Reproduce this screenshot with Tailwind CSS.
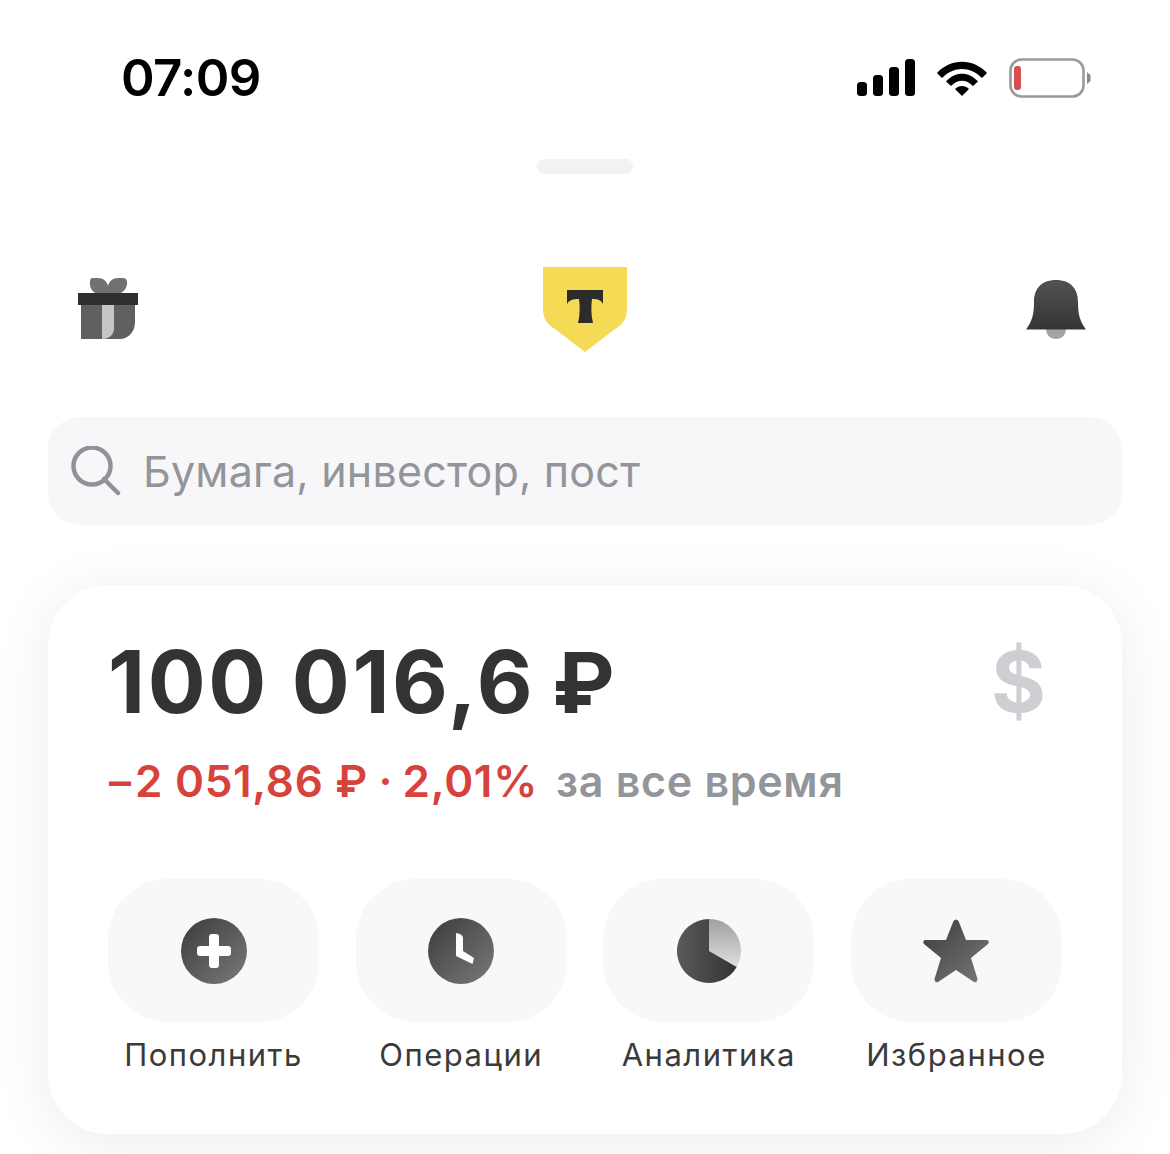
<!DOCTYPE html>
<html lang="ru">
<head>
<meta charset="utf-8">
<script src="https://cdn.jsdelivr.net/npm/@tailwindcss/browser@4"></script>
<title>Портфель</title>
</head>
<body class="bg-white">
<div class="w-[1170px] h-[1154px] overflow-hidden bg-white font-['Inter','Noto_Sans',sans-serif]">
  <!-- status bar -->
  <div class="flex items-center justify-between h-[60px] mt-[48px] pl-[121px] pr-[79px]">
    <span class="text-[51px] leading-[60px] font-semibold text-black tracking-[-0.6px]">07:09</span>
    <div class="flex items-center gap-[22px]">
      <svg class="w-[58px] h-[38px]" viewBox="0 0 58 38"><rect x="0" y="23" width="10" height="14" rx="3.5"/><rect x="16" y="16" width="10" height="21" rx="3.5"/><rect x="32" y="8" width="10" height="29" rx="3.5"/><rect x="48" y="0" width="10" height="37" rx="3.5"/></svg>
      <svg class="w-[50px] h-[38px]" viewBox="0 0 50 38"><path d="M0 14 C14 -1 36 -1 50 14 L45 19 C33 7 17 7 5 19Z"/><path d="M9 22.5 C18 12 32 12 41 22.5 L36 27 C29 20 21 20 14 27Z"/><path d="M18 30 C22 26 28 26 32 30 L25 37Z"/></svg>
      <svg class="w-[82px] h-[40px]" viewBox="0 0 82 40"><rect x="1.5" y="1.5" width="73" height="37" rx="11" fill="none" stroke="#9a9a9a" stroke-width="2.6"/><rect x="5" y="8" width="7" height="24" rx="3" fill="#d94f4f"/><path d="M78 14 L81.500 17 V23 L78 26Z" fill="#8a8a8a"/></svg>
    </div>
  </div>

  <!-- handle -->
  <div class="w-[96px] h-[15px] rounded-full bg-[#f1f2f4] mx-auto mt-[51px]"></div>

  <!-- header icons -->
  <div class="flex items-start h-[85px] mt-[93px] pl-[78px]">
    <svg class="w-[60px] h-[61px] mt-[11px]" viewBox="0 0 60 61">
      <path d="M12 3 Q12 0 15 0 H20 C25 0 29 3 30 8 C31 3 35 0 40 0 H45 Q48 0 49 3 C50 10 45 15 40 16 H20 C15 15 11 10 12 3Z" fill="#717171"/>
      <path d="M3 27 H57 V44 C57 54 50 61 42 61 H3Z" fill="#606060"/>
      <path d="M24 27 H36 V50 C36 57 31 61 24 61Z" fill="#c6c6c6"/>
      <rect x="0" y="15" width="60" height="12" fill="#2f2f2f"/>
    </svg>
    <svg class="w-[84px] h-[85px] ml-[405px]" viewBox="0 0 84 85">
      <path d="M0 0 H84 V42 C84 52 79 58 72 62 L42 85 L12 62 C5 58 0 52 0 42Z" fill="#f5da55"/>
      <path d="M24 23 H60 V37 C58 33 55 32 49 32 C48 40 48 48 50 56 H35 C37 48 37 40 36 32 C30 32 26 33 24 37Z" fill="#2e2c2a"/>
    </svg>
    <svg class="w-[60px] h-[60px] mt-[13px] ml-[399px]" viewBox="0 0 60 60">
      <defs><linearGradient id="bell" x1="0" y1="0" x2="0" y2="1"><stop offset="0" stop-color="#525252"/><stop offset="1" stop-color="#353535"/></linearGradient></defs>
      <path d="M20 48 H40 C40 55 36 59 30 59 C24 59 20 55 20 48Z" fill="#a3a3a3"/>
      <path d="M30 0 C45 0 52 9 52 22 C52 35 54 41 60 49.500 H0 C6 41 8 35 8 22 C8 9 15 0 30 0Z" fill="url(#bell)"/>
    </svg>
  </div>

  <!-- search -->
  <div class="flex items-center gap-[22px] h-[108px] mt-[65px] mx-[48px] pl-[23px] rounded-[32px] bg-[#f7f7f9]">
    <svg class="w-[50px] h-[50px] shrink-0" viewBox="0 0 50 50" fill="none" stroke="#8f9297" stroke-width="4.500" stroke-linecap="round"><circle cx="21" cy="20" r="18.500"/><path d="M33 33 L47 47"/></svg>
    <span class="text-[43px] leading-[50px] text-[#92959a] tracking-[0.2px]">Бумага, инвестор, пост</span>
  </div>

  <!-- card -->
  <div class="h-[549px] mt-[60px] mx-[48px] pt-[52px] px-[60px] rounded-[60px] bg-white shadow-[0_8px_60px_rgba(0,0,0,0.08)]">
    <div class="flex items-center justify-between h-[90px] pr-[16px]">
      <span class="text-[86px] leading-[90px] font-bold text-[#333333] tracking-[2.6px] whitespace-nowrap">100 016,6 <span class="text-[84px] tracking-normal ml-[-6px]">₽</span></span>
      <span class="text-[84px] leading-[90px] font-bold text-[#cdcfd2]">$</span>
    </div>
    <div class="flex items-center gap-[18px] h-[56px] mt-[26px] whitespace-nowrap">
      <span class="text-[44px] leading-[56px] font-semibold text-[#d8423c] tracking-[0.7px]"><span class="ml-[1px] tracking-[4px]">–</span>2 051,86 ₽<span class="tracking-[-0.6px]"> · </span>2,01%</span>
      <span class="text-[43px] leading-[56px] font-semibold text-[#92959a] tracking-[0.7px]">за все время</span>
    </div>
    <div class="flex justify-between w-[954px] mt-[70px]">
      <div class="flex flex-col items-center w-[211px]">
        <div class="flex items-center justify-center w-full h-[143px] rounded-[60px] bg-[#f8f8f8]">
          <svg class="w-[66px] h-[66px]" viewBox="0 0 66 66">
            <defs><linearGradient id="g1" x1="0" y1="0" x2="1" y2="1"><stop offset="0" stop-color="#3b3b3b"/><stop offset="1" stop-color="#7a7a7a"/></linearGradient></defs>
            <circle cx="33" cy="33" r="33" fill="url(#g1)"/>
            <path d="M28 19 A3 3 0 0 1 31 16 H35 A3 3 0 0 1 38 19 V28 H47 A3 3 0 0 1 50 31 V35 A3 3 0 0 1 47 38 H38 V47 A3 3 0 0 1 35 50 H31 A3 3 0 0 1 28 47 V38 H19 A3 3 0 0 1 16 35 V31 A3 3 0 0 1 19 28 H28Z" fill="#fff"/>
          </svg>
        </div>
        <span class="text-[31px] leading-[40px] mt-[13px] text-[#3a3a3a] whitespace-nowrap tracking-[1.5px]">Пополнить</span>
      </div>
      <div class="flex flex-col items-center w-[211px]">
        <div class="flex items-center justify-center w-full h-[143px] rounded-[60px] bg-[#f8f8f8]">
          <svg class="w-[66px] h-[66px]" viewBox="0 0 66 66">
            <circle cx="33" cy="33" r="33" fill="url(#g1)"/>
            <path d="M28 15 V38 L44.500 46 L46 40 L35 33 V20 Q35 16 28 15Z" fill="#fff"/>
          </svg>
        </div>
        <span class="text-[31px] leading-[40px] mt-[13px] text-[#3a3a3a] whitespace-nowrap tracking-[1.5px]">Операции</span>
      </div>
      <div class="flex flex-col items-center w-[211px]">
        <div class="flex items-center justify-center w-full h-[143px] rounded-[60px] bg-[#f8f8f8]">
          <svg class="w-[64px] h-[64px]" viewBox="0 0 64 64">
            <defs>
              <linearGradient id="p1" x1="0" y1="0" x2="1" y2="0"><stop offset="0" stop-color="#5a5a5a"/><stop offset="1" stop-color="#333"/></linearGradient>
              <linearGradient id="p2" x1="0" y1="0" x2="0" y2="1"><stop offset="0" stop-color="#a0a0a0"/><stop offset="1" stop-color="#dedede"/></linearGradient>
            </defs>
            <path d="M32 0 A32 32 0 0 1 59.700 48 L32 32Z" fill="url(#p2)"/>
            <path d="M32 0 V32 L59.700 48 A32 32 0 1 1 32 0Z" fill="url(#p1)"/>
          </svg>
        </div>
        <span class="text-[31px] leading-[40px] mt-[13px] text-[#3a3a3a] whitespace-nowrap tracking-[1.5px]">Аналитика</span>
      </div>
      <div class="flex flex-col items-center w-[211px]">
        <div class="flex items-center justify-center w-full h-[143px] rounded-[60px] bg-[#f8f8f8]">
          <svg class="w-[66px] h-[64px]" viewBox="0 0 66 64">
            <path d="M30.500 2 Q33 -1 35.500 2 L43 21 L64 21 Q67 22 65 25 L48 39 L54.500 60 Q54 64 51 63 L33 51 L15 63 Q12 64 11.500 60 L18 39 L1 25 Q-1 22 2 21 L23 21Z" fill="url(#g1)"/>
          </svg>
        </div>
        <span class="text-[31px] leading-[40px] mt-[13px] text-[#3a3a3a] whitespace-nowrap tracking-[1.5px]">Избранное</span>
      </div>
    </div>
  </div>
</div>
</body>
</html>
